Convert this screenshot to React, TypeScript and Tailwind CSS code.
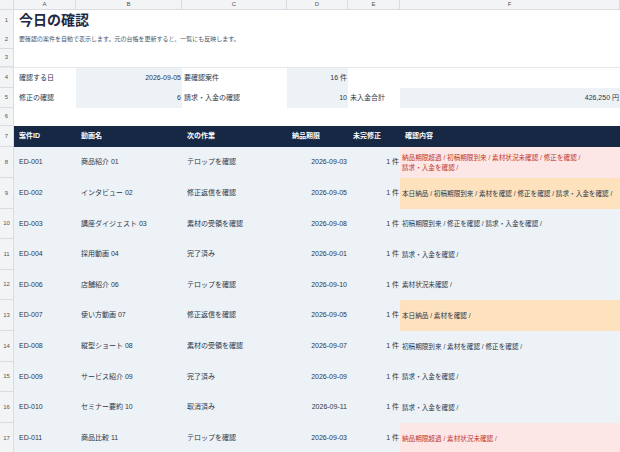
const cols = "grid-cols-[14px_62px_106px_105px_61px_52px_220px]";
const F = { fontFamily: '"Liberation Sans","Noto Sans CJK JP",sans-serif' };

type R = { id: string; name: string; next: string; due: string; c: string; tone?: "red" | "orange"; h: number; n: number };
const rows: R[] = [
  { n: 8, id: "ED-001", name: "商品紹介 01", next: "テロップを確認", due: "2026-09-03", c: "納品期限超過 / 初稿期限到来 / 素材状況未確認 / 修正を確認 /\n請求・入金を確認 /", tone: "red", h: 31 },
  { n: 9, id: "ED-002", name: "インタビュー 02", next: "修正返信を確認", due: "2026-09-05", c: "本日納品 / 初稿期限到来 / 素材を確認 / 修正を確認 / 請求・入金を確認 /", tone: "orange", h: 31 },
  { n: 10, id: "ED-003", name: "講座ダイジェスト 03", next: "素材の受領を確認", due: "2026-09-08", c: "初稿期限到来 / 修正を確認 / 請求・入金を確認 /", h: 30 },
  { n: 11, id: "ED-004", name: "採用動画 04", next: "完了済み", due: "2026-09-01", c: "請求・入金を確認 /", h: 31 },
  { n: 12, id: "ED-006", name: "店舗紹介 06", next: "テロップを確認", due: "2026-09-10", c: "素材状況未確認 /", h: 30 },
  { n: 13, id: "ED-007", name: "使い方動画 07", next: "修正返信を確認", due: "2026-09-05", c: "本日納品 / 素材を確認 /", tone: "orange", h: 31 },
  { n: 14, id: "ED-008", name: "縦型ショート 08", next: "素材の受領を確認", due: "2026-09-07", c: "初稿期限到来 / 素材を確認 / 修正を確認 /", h: 31 },
  { n: 15, id: "ED-009", name: "サービス紹介 09", next: "完了済み", due: "2026-09-09", c: "請求・入金を確認 /", h: 30 },
  { n: 16, id: "ED-010", name: "セミナー要約 10", next: "取消済み", due: "2026-09-11", c: "請求・入金を確認 /", h: 31 },
  { n: 17, id: "ED-011", name: "商品比較 11", next: "テロップを確認", due: "2026-09-03", c: "納品期限超過 / 素材状況未確認 /", tone: "red", h: 31 },
];

const Num = ({ n }: { n: number | string }) => (
  <div className="bg-[#f3f4f6] border-r border-b border-[#d9dce0] text-[6px] text-[#555] flex items-center justify-center">{n}</div>
);

export default function App() {
  return (
    <div style={F} className="w-[620px] h-[452px] overflow-hidden bg-white text-[7px] text-[#2d3748]">
      <div className={`grid ${cols} h-[10px] bg-[#f3f4f6] text-[6px] text-[#555]`}>
        {["", "A", "B", "C", "D", "E", "F"].map((c, i) => (
          <div key={i} className="border-r border-b border-[#d9dce0] flex items-center justify-center">{c}</div>
        ))}
      </div>
      <div className={`grid ${cols} h-[20px]`}>
        <Num n={1} />
        <div className="col-span-6 flex items-center pl-[5px] text-[14px] font-bold text-[#1e2a44]">今日の確認</div>
      </div>
      <div className={`grid ${cols} h-[19px]`}>
        <Num n={2} />
        <div className="col-span-6 flex items-center pl-[5px] text-[6px] text-[#4a5568]">要確認の案件を自動で表示します。元の台帳を更新すると、一覧にも反映します。</div>
      </div>
      <div className={`grid ${cols} h-[19px] border-b border-[#e5e7eb]`}>
        <Num n={3} />
        <div className="col-span-6" />
      </div>
      <div className={`grid ${cols} h-[20px]`}>
        <Num n={4} />
        <div className="flex items-center pl-[5px]">確認する日</div>
        <div className="bg-[#edf2f7] flex items-center justify-end pr-[1px]">2026-09-05</div>
        <div className="flex items-center pl-[2px]">要確認案件</div>
        <div className="bg-[#edf2f7] flex items-center justify-end pr-[1px]">16 件</div>
        <div className="col-span-2" />
      </div>
      <div className={`grid ${cols} h-[20px]`}>
        <Num n={5} />
        <div className="flex items-center pl-[5px]">修正の確認</div>
        <div className="bg-[#edf2f7] flex items-center justify-end pr-[1px]">6</div>
        <div className="flex items-center pl-[2px]">請求・入金の確認</div>
        <div className="bg-[#edf2f7] flex items-center justify-end pr-[1px]">10</div>
        <div className="flex items-center pl-[2px]">未入金合計</div>
        <div className="bg-[#edf2f7] flex items-center justify-end pr-[1px]">426,250 円</div>
      </div>
      <div className={`grid ${cols} h-[18px]`}>
        <Num n={6} />
        <div className="col-span-6" />
      </div>
      <div className={`grid ${cols} h-[21px]`}>
        <Num n={7} />
        {["案件ID", "動画名", "次の作業", "納品期限", "未完修正", "確認内容"].map((h, i) => (
          <div key={i} className="bg-[#172844] text-white font-bold flex items-center pl-[5px]">{h}</div>
        ))}
      </div>
      {rows.map((r) => (
        <div key={r.n} className={`grid ${cols}`} style={{ height: r.h }}>
          <Num n={r.n} />
          <div className="bg-[#edf2f7] flex items-center pl-[5px]">{r.id}</div>
          <div className="bg-[#edf2f7] flex items-center pl-[5px]">{r.name}</div>
          <div className="bg-[#edf2f7] flex items-center pl-[5px]">{r.next}</div>
          <div className="bg-[#edf2f7] flex items-center justify-end pr-[1px]">{r.due}</div>
          <div className="bg-[#edf2f7] flex items-center justify-end pr-[1px]">1 件</div>
          <div
            className={`flex items-center pl-[2px] whitespace-pre-line text-[6.6px] leading-[10px] ${
              r.tone === "red" ? "bg-[#fde6e6] text-[#c0392b]" : r.tone === "orange" ? "bg-[#fde2bd]" : "bg-[#edf2f7]"
            }`}
          >
            {r.c}
          </div>
        </div>
      ))}
    </div>
  );
}
